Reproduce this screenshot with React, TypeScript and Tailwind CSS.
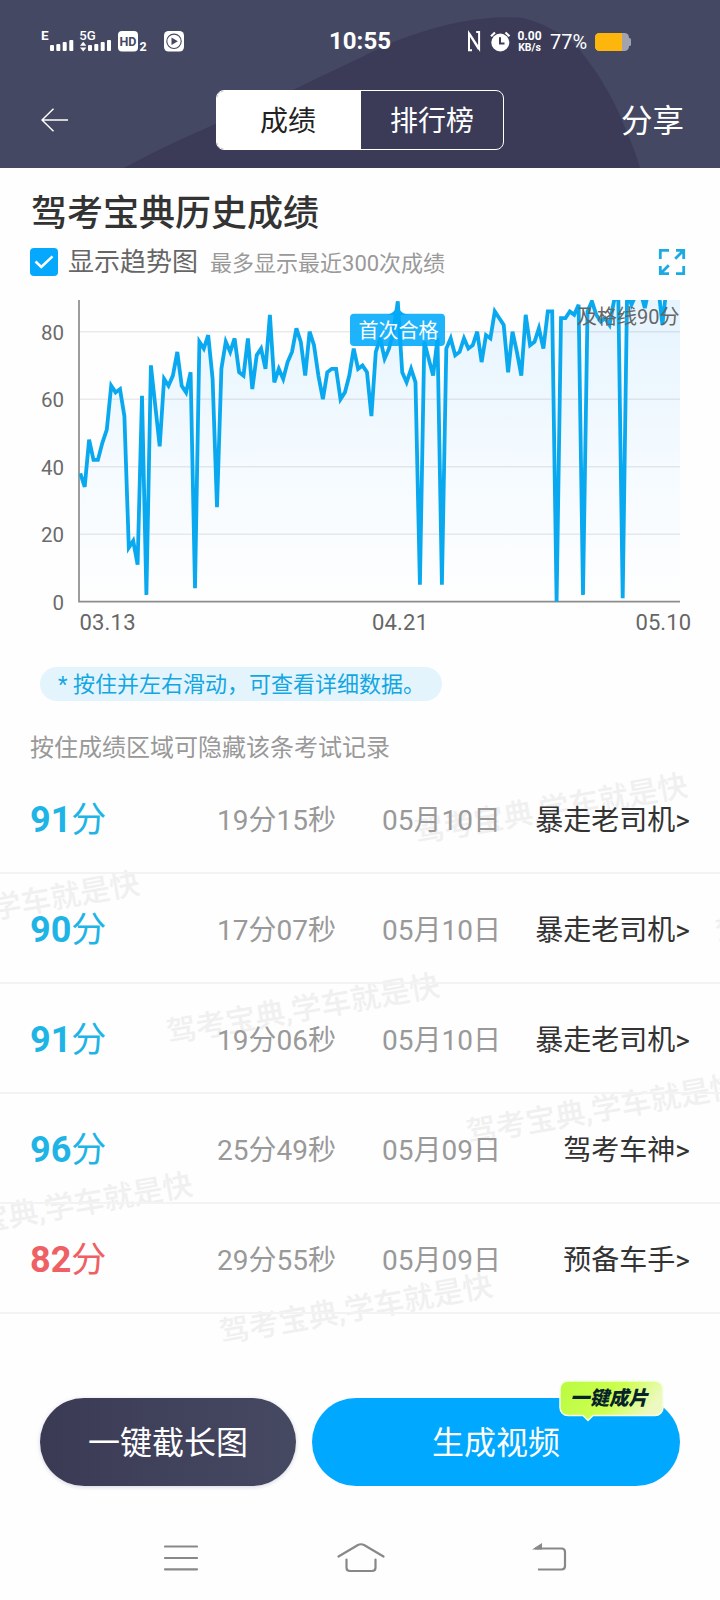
const scores = [
  38, 34, 48, 42, 42, 47, 51, 64, 62, 63, 55, 16, 18, 11, 61, 2, 70, 58, 46, 66,
  64, 67, 74, 64, 62, 68, 4, 77, 75, 79, 66, 28, 69, 77, 74, 78, 68, 67, 78, 63,
  73, 75, 69, 85, 65, 69, 66, 71, 74, 81, 77, 67, 80, 76, 67, 60, 68, 69, 69, 60,
  62, 67, 75, 69, 70, 68, 55, 74, 78, 72, 75, 80, 89, 68, 65, 69, 65, 5, 77, 72,
  67, 78, 5, 75, 78, 73, 74, 78, 75, 76, 80, 71, 79, 78, 86, 84, 82, 68, 80, 74,
  67, 85, 76, 77, 81, 75, 86, 86, 0, 84, 84, 86, 85, 88, 2, 86, 89, 85, 83, 84,
  82, 89, 91, 1, 92, 88, 91, 92, 87, 93, 92, 94, 82, 94, 93, 95, 94,
]

const records = [
  { score: 91, time: '19分15秒', date: '05月10日', rank: '暴走老司机' },
  { score: 90, time: '17分07秒', date: '05月10日', rank: '暴走老司机' },
  { score: 91, time: '19分06秒', date: '05月10日', rank: '暴走老司机' },
  { score: 96, time: '25分49秒', date: '05月09日', rank: '驾考车神' },
  { score: 82, time: '29分55秒', date: '05月09日', rank: '预备车手' },
]

// centre of each watermark, relative to the list
const marks = [
  [551, 45],
  [3, 143],
  [852, 145],
  [303, 245],
  [603, 345],
  [56, 444],
  [356, 545],
]

function StatusBar() {
  return (
    <div className="relative flex h-[82px] items-center text-white">
      <svg className="ml-10 h-[26px] w-[146px]" viewBox="40 28 146 26" fill="#fff" fontFamily="Roboto, sans-serif">
        <text x="41" y="40" fontSize="13.5" fontWeight="700">E</text>
        <rect x="50" y="45" width="4" height="6" rx="1" />
        <rect x="56.3" y="44" width="4" height="7" rx="1" />
        <rect x="62.7" y="42" width="4" height="9" rx="1" />
        <rect x="69.3" y="40" width="4" height="11" rx="1" />
        <text x="79.3" y="40" fontSize="13.5" fontWeight="500" textLength="16.5" lengthAdjust="spacingAndGlyphs">5G</text>
        <path d="M80 45.7l3.2-4 3.2 4zM80 47.5l3.2 4 3.2-4z" />
        <rect x="88" y="45" width="4" height="6" rx="1" />
        <rect x="94.3" y="44" width="4" height="7" rx="1" />
        <rect x="100.7" y="42" width="4" height="9" rx="1" />
        <rect x="107" y="40" width="4" height="11" rx="1" />
        <rect x="118" y="31" width="20" height="20.5" rx="4" />
        <text x="119.5" y="46.2" fontSize="13.5" fontWeight="700" fill="#454862" textLength="17" lengthAdjust="spacingAndGlyphs">HD</text>
        <text x="139.5" y="51" fontSize="12.5" fontWeight="700">2</text>
        <rect x="164" y="31" width="20" height="20.5" rx="4.5" />
        <circle cx="174" cy="41.3" r="7.2" fill="none" stroke="#454862" strokeWidth="1.1" />
        <path d="M171.5 37.5v7.6l6.3-3.8z" fill="#454862" />
      </svg>
      <div className="ml-[142.5px] w-[63px] text-center text-2xl font-bold">10:55</div>
      <svg className="ml-[75.5px] h-6 w-[44px]" viewBox="467 29 44 24" fill="none" stroke="#fff">
        <path d="M472 50.3h-3V33.5l9.8 15.6M476.2 32h2.9v16.6l-10.1-15.6" strokeWidth="2" />
        <circle cx="500.3" cy="42.5" r="9" fill="#fff" stroke="none" />
        <path d="M491 36.2l4-3.7M509.5 36.2l-4-3.7" strokeWidth="2.2" />
        <path d="M500 37.3v6.2h4.5" stroke="#3c3c58" strokeWidth="2" />
      </svg>
      <div className="mt-px ml-[6px] flex w-[25px] flex-col items-center text-[10.5px] leading-[11px] font-bold">
        <span className="text-[12px]">0.00</span>
        <span>KB/s</span>
      </div>
      <div className="mt-px ml-[8px] w-[38px] text-[20px]">77%</div>
      <svg className="mt-px ml-[7px] h-5 w-[37px]" viewBox="0 0 37 20">
        <rect x="0" y="1" width="34" height="18" rx="4.5" fill="#a3a3ae" />
        <rect x="33" y="6" width="3" height="8" rx="1.5" fill="#a3a3ae" />
        <path d="M4.5 1H27v18H4.5A4.5 4.5 0 0 1 0 14.5V5.5A4.5 4.5 0 0 1 4.5 1z" fill="#ffb60c" />
      </svg>
    </div>
  )
}

function Header() {
  return (
    <header className="relative h-[168px] overflow-hidden bg-[#454862]">
      <svg className="absolute inset-0 h-[168px] w-[720px]" viewBox="0 0 720 168">
        <path
          d="M124 168C155 151 184 138 213 125C242 113 268 103 295 89C316 79 338 68 360 58C371 52 382 47 393 42C415 34 438 26 460 22C482 18 505 16 523 18C535 21 544 25 553 30C566 36 573 42 580 50C588 61 596 71 603 83C611 96 618 110 623 123C630 139 636 153 640 168Z"
          fill="#3b3b57"
        />
      </svg>
      <StatusBar />
      <div className="relative flex h-[76px] items-center text-white">
        <svg className="ml-[41px] h-6 w-7" viewBox="0 0 28 24" fill="none" stroke="#fff" strokeWidth="1.5">
          <path d="M27 12H1.5M12.5 .8L1 12L12.5 23.2" />
        </svg>
        <div className="ml-[147px] flex h-[60px] w-[288px] overflow-hidden rounded-lg border border-white text-[28px]">
          <div className="flex w-[144px] items-center justify-center bg-white pt-[3px] pr-0.5 text-[#222]">成绩</div>
          <div className="flex flex-1 items-center justify-center pt-[3px]">排行榜</div>
        </div>
        <div className="mt-[3px] mr-9 ml-auto text-[31.5px]">分享</div>
      </div>
    </header>
  )
}

function TrendChart() {
  const points = scores.map((s, i) => `${(80.3 + i * 4.41).toFixed(1)},${(301.7 - s * 3.375).toFixed(1)}`).join(' ')
  return (
    <svg className="block h-[340px] w-[720px]" viewBox="0 0 720 340" fontFamily="Roboto, 'Noto Sans CJK SC', sans-serif">
      <defs>
        <linearGradient id="area" x1="0" y1="0" x2="0" y2="302" gradientUnits="userSpaceOnUse">
          <stop offset="0" stopColor="#e6f4fe" />
          <stop offset=".6" stopColor="#f6fbff" />
          <stop offset="1" stopColor="#fefefe" />
        </linearGradient>
        <clipPath id="plot">
          <rect x="79" y="0" width="601" height="303" />
        </clipPath>
      </defs>
      <g clipPath="url(#plot)">
        <polygon points={`80,301.7 ${points} 680,301.7`} fill="url(#area)" />
        {[20, 40, 60, 80].map((v) => (
          <rect key={v} x="80" y={301 - v * 3.375} width="600" height="1.5" fill="#000" fillOpacity=".08" />
        ))}
      </g>
      <path d="M79 0V301.7H680" fill="none" stroke="#8c8c8c" strokeWidth="1.7" />
      <polyline points={points} fill="none" stroke="#0aa9ef" strokeWidth="3.8" clipPath="url(#plot)" />
      <g fontSize="20.5" fill="#6b6b6b" textAnchor="end">
        <text x="64" y="39.5">80</text>
        <text x="64" y="107">60</text>
        <text x="64" y="174.5">40</text>
        <text x="64" y="242">20</text>
        <text x="64" y="309.5">0</text>
      </g>
      <g fontSize="22" fill="#666">
        <text x="79.5" y="330" textLength="56">03.13</text>
        <text x="372" y="330" textLength="56">04.21</text>
        <text x="635.5" y="330" textLength="55.5">05.10</text>
      </g>
      <path d="M387 15c5-1.500 6-3 10.300-7c4.500 4 5.500 5.500 10.500 7z" fill="#08a9f4" />
      <rect x="350" y="13.7" width="95" height="32.3" rx="4" fill="#00a9fb" fillOpacity=".88" />
      <text x="398.5" y="38" fontSize="20" fill="#fff" textAnchor="middle">首次合格</text>
      <text x="679.5" y="23.5" fontSize="20" fill="#666" textAnchor="end">及格线90分</text>
    </svg>
  )
}

function RecordList() {
  return (
    <div className="relative">
      {/* 水印 */}
      <div className="absolute inset-x-0 top-0 h-[620px] overflow-hidden">
        {marks.map(([x, y], i) => (
          <div
            key={i}
            className="absolute -translate-x-1/2 -translate-y-1/2 -rotate-10 text-[30px] font-medium whitespace-nowrap text-[#f0f0f0]"
            style={{ left: x, top: y }}
          >
            驾考宝典,学车就是快
          </div>
        ))}
      </div>
      {records.map((r, i) => (
        <div key={i} className="relative flex h-[110px] items-center border-b-2 border-[#f3f3f3] px-[30px] pt-[5px] text-[28px] text-[#999]">
          <div className={`w-[187px] text-[36px] ${r.score >= 90 ? 'text-[#1eb4e6]' : 'text-[#ee6064]'}`}>
            <span className="font-bold">{r.score}</span>
            <span className="text-[35px]">分</span>
          </div>
          <div className="w-[165px]">{r.time}</div>
          <div>{r.date}</div>
          <div className="ml-auto text-[#333]">{r.rank}&gt;</div>
        </div>
      ))}
    </div>
  )
}

export default function App() {
  return (
    <div className="flex h-[1600px] w-[720px] flex-col overflow-hidden bg-[#fefefe] font-[Roboto,'Noto_Sans_CJK_SC',sans-serif]">
      <Header />
      <main>
        <h1 className="mt-[24px] ml-[31px] text-[36px] leading-[44px] font-medium text-[#333]">驾考宝典历史成绩</h1>
        <div className="mt-[8px] flex h-9 items-center pr-[34px] pl-[30px]">
          <div className="flex h-7 w-7 items-center justify-center rounded bg-[#05a8fc]">
            <svg className="h-3.5 w-5" viewBox="0 0 20 14" fill="none" stroke="#fff" strokeWidth="2.5">
              <path d="M1.5 6.5L7.3 12L18.5 1.3" />
            </svg>
          </div>
          <span className="ml-2.5 text-[26px] text-[#666]">显示趋势图</span>
          <span className="mt-0.5 ml-3 text-[22px] text-[#999]">最多显示最近300次成绩</span>
          <svg className="ml-auto h-7 w-7" viewBox="0 0 28 28" fill="none" stroke="#1caae2" strokeWidth="2.8">
            <path d="M2.3 11V2.3h8.700M18 2.3h7.700V11M25.700 2.300l-8.500 8.500M2.300 18v7.700H11M2.300 25.700l8.500-8.500M25.700 18v7.700H18" />
          </svg>
        </div>
        <div className="mt-5">
          <TrendChart />
        </div>
        <div className="mt-[27px] ml-10 flex h-[34px] w-[402px] items-center rounded-full bg-[#e4f4fd] pl-[18px] text-[22px] text-[#12a7e2]">
          * 按住并左右滑动，可查看详细数据。
        </div>
        <p className="mt-[29px] ml-[30px] text-2xl leading-9 text-[#999]">按住成绩区域可隐藏该条考试记录</p>
        <div className="mt-[-2px]">
          <RecordList />
        </div>
      </main>
      <div className="relative mt-[84px] flex gap-4 px-10 text-[32px] text-white">
        <button className="h-[88px] w-[256px] rounded-full bg-linear-to-r from-[#3b3a55] to-[#464962] pt-[2px] shadow-[0_1px_4px_#d4d4e4]">一键截长图</button>
        <button className="relative h-[88px] flex-1 rounded-full bg-[#00a9ff] pt-[2px]">
          生成视频
          <span className="absolute top-[-18px] left-[246.5px] flex h-[37px] w-[105px] items-center justify-center">
            <svg className="absolute top-0 left-0 h-[42px] w-[105px]" viewBox="0 0 105 42">
              <defs>
                <linearGradient id="badge" x1="0" y1="0" x2="1" y2=".3">
                  <stop offset="0" stopColor="#b9fb40" />
                  <stop offset=".6" stopColor="#cdff50" />
                  <stop offset="1" stopColor="#edf9c0" />
                </linearGradient>
              </defs>
              <path
                d="M9 1H96a8 8 0 0 1 8 8V27.500a8 8 0 0 1-8 8H34l-5 5-5-5H9a8 8 0 0 1-8-8V9A8 8 0 0 1 9 1z"
                fill="url(#badge)"
                stroke="#f4ffe4"
                strokeWidth="1.5"
              />
            </svg>
            <span className="relative -ml-1 text-[19.5px] font-black text-[#06222b] italic">一键成片</span>
          </span>
        </button>
      </div>
      <nav className="mt-[54px] flex items-center pl-[164px]">
        <svg className="h-9 w-[34px]" viewBox="0 0 34 36" stroke="#888" strokeWidth="2.2" strokeLinecap="round">
          <path d="M1 6.5h32M1 18h32M1 29.3h32" />
        </svg>
        <svg className="ml-[139px] h-9 w-12" viewBox="0 0 48 36" fill="none" stroke="#888" strokeWidth="2.2" strokeLinecap="round">
          <path d="M1.5 16.5L20.5 5.2Q24 3.3 27.5 5.2L46.5 16.5M9.5 19.5V27.5Q9.5 31 13 31H35Q38.5 31 38.5 27.5V19.5" />
        </svg>
        <svg className="ml-[147px] h-9 w-[35px]" viewBox="0 0 35 36" fill="none" stroke="#888" strokeWidth="2.2">
          <path d="M3 8.5H29.5Q33 8.5 33 12V26Q33 29.5 29.5 29.5H6" />
          <path d="M0 9.5L10 3V9.5z" fill="#888" stroke="none" />
        </svg>
      </nav>
    </div>
  )
}
